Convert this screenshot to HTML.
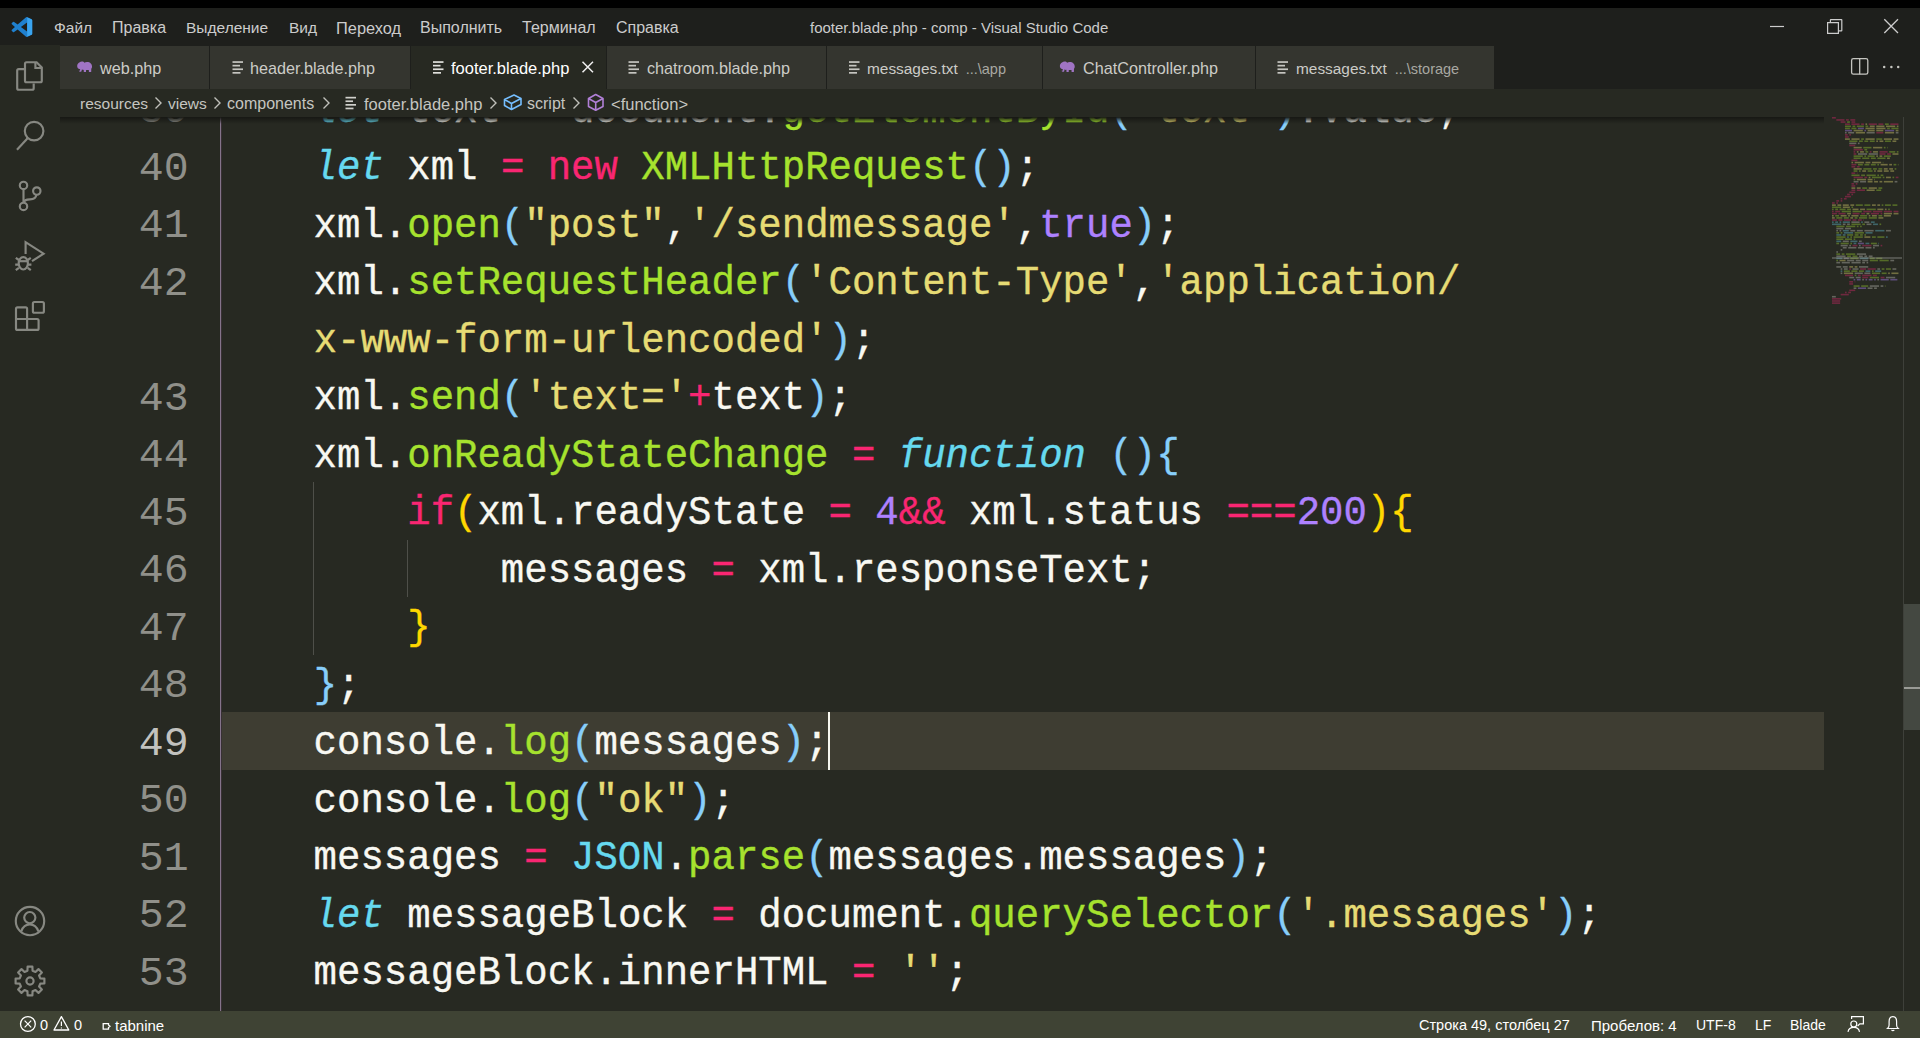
<!DOCTYPE html>
<html><head><meta charset="utf-8">
<style>
*{margin:0;padding:0;box-sizing:border-box}
html,body{width:1920px;height:1038px;overflow:hidden;background:#000;font-family:"Liberation Sans",sans-serif}
.abs{position:absolute}
#title{position:absolute;left:0;top:8px;width:1920px;height:37px;background:#1e1f1c;color:#cccccc;font-size:16px}
#title .m{position:absolute;top:11px;white-space:nowrap}
#act{position:absolute;left:0;top:45px;width:60px;height:966px;background:#272922}
#tabs{position:absolute;left:60px;top:45px;width:1860px;height:44px;background:#1e1f1c}
.tab{position:absolute;top:1px;height:43px;background:#34352f;color:#ccccc7;font-size:16.2px;white-space:nowrap}
.tab.active{background:#272922;color:#ffffff;font-size:16.5px}
.tab .lbl{position:absolute;top:13px}
.tab .desc{font-size:14.5px;color:#a8a8a2;margin-left:8px}
#crumbs{position:absolute;left:60px;top:89px;width:1860px;height:28px;background:#272922;color:#c5c5c0;font-size:15.5px;white-space:nowrap}
#crumbs span{position:absolute;top:6px}
#editor{position:absolute;left:60px;top:117px;width:1860px;height:894px;background:#272922;overflow:hidden}
#code{position:absolute;left:-60px;top:-117px;width:1920px;height:1011px}
.row{position:absolute;left:220px;height:57.5px;line-height:57.5px;font-family:"Liberation Mono",monospace;font-size:39px;color:#f8f8f2;white-space:pre;transform:scaleY(1.04);transform-origin:0 37px;-webkit-text-stroke:0.35px currentColor}
.row i{font-style:italic}
.ln{position:absolute;left:80px;width:108.6px;text-align:right;height:57.5px;line-height:57.5px;font-family:"Liberation Mono",monospace;font-size:41.5px;color:#90908a}
.ln.act{color:#c2c2bf}
#shadow{position:absolute;left:60px;top:117px;width:1764px;height:7px;background:linear-gradient(#171814,rgba(39,40,34,0))}
#status{position:absolute;left:0;top:1011px;width:1920px;height:27px;background:#3f4334;color:#ffffff;font-size:14.5px;white-space:nowrap}
#status .s{position:absolute;top:6px}
#icons{position:absolute;left:0;top:0}
</style></head><body>
<div id="title">
  <span class="m" style="left:54px;font-size:15.5px">Файл</span>
  <span class="m" style="left:112px">Правка</span>
  <span class="m" style="left:186px;font-size:15.5px">Выделение</span>
  <span class="m" style="left:289px;font-size:15.5px">Вид</span>
  <span class="m" style="left:336px;font-size:16.4px">Переход</span>
  <span class="m" style="left:420px">Выполнить</span>
  <span class="m" style="left:522px">Терминал</span>
  <span class="m" style="left:616px">Справка</span>
  <span class="m" style="left:810px;font-size:15px">footer.blade.php - comp - Visual Studio Code</span>
</div>
<div id="act"></div>
<div id="tabs">
<div class="tab" style="left:0px;width:149px"><span class="lbl" style="left:40px"><span style="font-size:16.2px">web.php</span></span></div>
<div class="tab" style="left:150px;width:200px"><span class="lbl" style="left:40px"><span style="font-size:16.2px">header.blade.php</span></span></div>
<div class="tab active" style="left:351px;width:195px"><span class="lbl" style="left:40px"><span style="font-size:16.5px">footer.blade.php</span></span></div>
<div class="tab" style="left:547px;width:219px"><span class="lbl" style="left:40px"><span style="font-size:16.2px">chatroom.blade.php</span></span></div>
<div class="tab" style="left:767px;width:215px"><span class="lbl" style="left:40px"><span style="font-size:15.4px">messages.txt</span><span class="desc">...\app</span></span></div>
<div class="tab" style="left:983px;width:212px"><span class="lbl" style="left:40px"><span style="font-size:16.2px">ChatController.php</span></span></div>
<div class="tab" style="left:1196px;width:238px"><span class="lbl" style="left:40px"><span style="font-size:15.4px">messages.txt</span><span class="desc">...\storage</span></span></div>
</div>
<div id="crumbs">
  <span style="left:20px">resources</span>
  <span style="left:108px">views</span>
  <span style="left:167px;font-size:16px">components</span>
  <span style="left:304px;font-size:16.5px">footer.blade.php</span>
  <span style="left:467px;font-size:16px">script</span>
  <span style="left:551px;font-size:16.5px">&lt;function&gt;</span>
</div>
<div id="editor"><div id="code">
<div class="abs" style="left:222px;top:712.0px;width:1602px;height:57.5px;background:#3e3d32"></div>
<div class="abs" style="left:220px;top:117px;width:1px;height:894px;background:#84738a"></div>
<div class="abs" style="left:221px;top:117px;width:1px;height:894px;background:rgba(160,90,160,0.14)"></div>
<div class="abs" style="left:313px;top:482.0px;width:1px;height:172.5px;background:#4e4f49"></div>
<div class="abs" style="left:407px;top:539.5px;width:1px;height:57.5px;background:#4e4f49"></div>
<div class="ln" style="top:82.30px">39</div>
<div class="row" style="top:83.50px">    <i style="color:#66d9ef">let</i> text <span style="color:#f92672">=</span> document.<span style="color:#a6e22e">getElementById</span><span style="color:#87cefa">(</span><span style="color:#e6db74">&#x27;text&#x27;</span><span style="color:#87cefa">)</span>.value;</div>
<div class="ln" style="top:139.80px">40</div>
<div class="row" style="top:141.00px">    <i style="color:#66d9ef">let</i> xml <span style="color:#f92672">=</span> <span style="color:#f92672">new</span> <span style="color:#a6e22e">XMLHttpRequest</span><span style="color:#87cefa">()</span>;</div>
<div class="ln" style="top:197.30px">41</div>
<div class="row" style="top:198.50px">    xml.<span style="color:#a6e22e">open</span><span style="color:#87cefa">(</span><span style="color:#e6db74">&quot;post&quot;</span>,<span style="color:#e6db74">&#x27;/sendmessage&#x27;</span>,<span style="color:#ae81ff">true</span><span style="color:#87cefa">)</span>;</div>
<div class="ln" style="top:254.80px">42</div>
<div class="row" style="top:256.00px">    xml.<span style="color:#a6e22e">setRequestHeader</span><span style="color:#87cefa">(</span><span style="color:#e6db74">&#x27;Content-Type&#x27;</span>,<span style="color:#e6db74">&#x27;application/</span></div>
<div class="row" style="top:313.50px">    <span style="color:#e6db74">x-www-form-urlencoded&#x27;</span><span style="color:#87cefa">)</span>;</div>
<div class="ln" style="top:369.80px">43</div>
<div class="row" style="top:371.00px">    xml.<span style="color:#a6e22e">send</span><span style="color:#87cefa">(</span><span style="color:#e6db74">&#x27;text=&#x27;</span><span style="color:#f92672">+</span>text<span style="color:#87cefa">)</span>;</div>
<div class="ln" style="top:427.30px">44</div>
<div class="row" style="top:428.50px">    xml.<span style="color:#a6e22e">onReadyStateChange</span> <span style="color:#f92672">=</span> <i style="color:#66d9ef">function</i> <span style="color:#87cefa">(){</span></div>
<div class="ln" style="top:484.80px">45</div>
<div class="row" style="top:486.00px">        <span style="color:#f92672">if</span><span style="color:#ffd700">(</span>xml.readyState <span style="color:#f92672">=</span> <span style="color:#ae81ff">4</span><span style="color:#f92672">&amp;&amp;</span> xml.status <span style="color:#f92672">===</span><span style="color:#ae81ff">200</span><span style="color:#ffd700">){</span></div>
<div class="ln" style="top:542.30px">46</div>
<div class="row" style="top:543.50px">            messages <span style="color:#f92672">=</span> xml.responseText;</div>
<div class="ln" style="top:599.80px">47</div>
<div class="row" style="top:601.00px">        <span style="color:#ffd700">}</span></div>
<div class="ln" style="top:657.30px">48</div>
<div class="row" style="top:658.50px">    <span style="color:#87cefa">}</span>;</div>
<div class="ln act" style="top:714.80px">49</div>
<div class="row" style="top:716.00px">    console.<span style="color:#a6e22e">log</span><span style="color:#87cefa">(</span>messages<span style="color:#87cefa">)</span>;</div>
<div class="ln" style="top:772.30px">50</div>
<div class="row" style="top:773.50px">    console.<span style="color:#a6e22e">log</span><span style="color:#87cefa">(</span><span style="color:#e6db74">&quot;ok&quot;</span><span style="color:#87cefa">)</span>;</div>
<div class="ln" style="top:829.80px">51</div>
<div class="row" style="top:831.00px">    messages <span style="color:#f92672">=</span> <span style="color:#66d9ef">JSON</span>.<span style="color:#a6e22e">parse</span><span style="color:#87cefa">(</span>messages.messages<span style="color:#87cefa">)</span>;</div>
<div class="ln" style="top:887.30px">52</div>
<div class="row" style="top:888.50px">    <i style="color:#66d9ef">let</i> messageBlock <span style="color:#f92672">=</span> document.<span style="color:#a6e22e">querySelector</span><span style="color:#87cefa">(</span><span style="color:#e6db74">&#x27;.messages&#x27;</span><span style="color:#87cefa">)</span>;</div>
<div class="ln" style="top:944.80px">53</div>
<div class="row" style="top:946.00px">    messageBlock.innerHTML <span style="color:#f92672">=</span> <span style="color:#e6db74">&#x27;&#x27;</span>;</div>
<div class="abs" style="left:828px;top:712.0px;width:2px;height:57.5px;background:#f8f8f0"></div>
</div></div>
<div id="shadow"></div>
<div class="abs" style="left:1903px;top:604px;width:17px;height:126px;background:#444841"></div>
<div class="abs" style="left:1903px;top:117px;width:1px;height:894px;background:#3e403a"></div>
<div class="abs" style="left:1904px;top:687px;width:16px;height:2px;background:#9a9b96"></div>
<div id="status">
  <span class="s" style="left:40px">0</span>
  <span class="s" style="left:74px">0</span>
  <span class="s" style="left:115px;font-size:15px">tabnine</span>
  <span class="s" style="left:1419px">Строка 49, столбец 27</span>
  <span class="s" style="left:1591px;font-size:15px">Пробелов: 4</span>
  <span class="s" style="left:1696px;font-size:14px">UTF-8</span>
  <span class="s" style="left:1755px;font-size:14px">LF</span>
  <span class="s" style="left:1790px;font-size:14px">Blade</span>
</div>
<svg id="icons" width="1920" height="1038" viewBox="0 0 1920 1038">
<rect x="1832.00" y="117.00" width="3.82" height="1.6" fill="rgba(200,40,100,0.45)"/>
<rect x="1836.32" y="119.13" width="8.14" height="1.6" fill="rgba(200,40,100,0.45)"/>
<rect x="1846.04" y="119.13" width="2.74" height="1.6" fill="rgba(200,40,100,0.45)"/>
<rect x="1850.36" y="119.13" width="4.90" height="1.6" fill="rgba(200,40,100,0.45)"/>
<rect x="1840.64" y="121.26" width="4.90" height="1.6" fill="rgba(200,40,100,0.45)"/>
<rect x="1847.12" y="121.26" width="2.74" height="1.6" fill="rgba(150,200,50,0.42)"/>
<rect x="1851.44" y="121.26" width="3.82" height="1.6" fill="rgba(200,40,100,0.45)"/>
<rect x="1844.96" y="123.39" width="4.90" height="1.6" fill="rgba(200,40,100,0.45)"/>
<rect x="1851.44" y="123.39" width="8.14" height="1.6" fill="rgba(200,40,100,0.45)"/>
<rect x="1861.16" y="123.39" width="2.74" height="1.6" fill="rgba(200,40,100,0.45)"/>
<rect x="1865.48" y="123.39" width="1.66" height="1.6" fill="rgba(220,210,110,0.42)"/>
<rect x="1868.72" y="123.39" width="8.14" height="1.6" fill="rgba(200,40,100,0.45)"/>
<rect x="1878.44" y="123.39" width="4.90" height="1.6" fill="rgba(200,40,100,0.45)"/>
<rect x="1884.92" y="123.39" width="3.82" height="1.6" fill="rgba(150,200,50,0.42)"/>
<rect x="1890.32" y="123.39" width="8.14" height="1.6" fill="rgba(200,40,100,0.45)"/>
<rect x="1844.96" y="125.52" width="5.98" height="1.6" fill="rgba(150,200,50,0.42)"/>
<rect x="1852.52" y="125.52" width="2.74" height="1.6" fill="rgba(150,200,50,0.42)"/>
<rect x="1856.84" y="125.52" width="7.06" height="1.6" fill="rgba(150,200,50,0.42)"/>
<rect x="1865.48" y="125.52" width="2.74" height="1.6" fill="rgba(150,200,50,0.42)"/>
<rect x="1869.80" y="125.52" width="4.90" height="1.6" fill="rgba(220,210,110,0.42)"/>
<rect x="1876.28" y="125.52" width="8.14" height="1.6" fill="rgba(220,210,110,0.42)"/>
<rect x="1886.00" y="125.52" width="9.22" height="1.6" fill="rgba(220,210,110,0.42)"/>
<rect x="1896.80" y="125.52" width="1.66" height="1.6" fill="rgba(220,210,110,0.42)"/>
<rect x="1844.96" y="127.65" width="4.90" height="1.6" fill="rgba(150,200,50,0.42)"/>
<rect x="1851.44" y="127.65" width="4.90" height="1.6" fill="rgba(150,200,50,0.42)"/>
<rect x="1857.92" y="127.65" width="5.98" height="1.6" fill="rgba(160,120,230,0.45)"/>
<rect x="1865.48" y="127.65" width="9.22" height="1.6" fill="rgba(220,210,110,0.42)"/>
<rect x="1876.28" y="127.65" width="9.22" height="1.6" fill="rgba(220,210,110,0.42)"/>
<rect x="1887.08" y="127.65" width="2.74" height="1.6" fill="rgba(150,200,50,0.42)"/>
<rect x="1891.40" y="127.65" width="7.06" height="1.6" fill="rgba(150,200,50,0.42)"/>
<rect x="1844.96" y="129.78" width="7.06" height="1.6" fill="rgba(160,120,230,0.45)"/>
<rect x="1853.60" y="129.78" width="9.22" height="1.6" fill="rgba(220,210,110,0.42)"/>
<rect x="1864.40" y="129.78" width="1.66" height="1.6" fill="rgba(160,120,230,0.45)"/>
<rect x="1867.64" y="129.78" width="7.06" height="1.6" fill="rgba(220,210,110,0.42)"/>
<rect x="1876.28" y="129.78" width="7.06" height="1.6" fill="rgba(220,210,110,0.42)"/>
<rect x="1884.92" y="129.78" width="9.22" height="1.6" fill="rgba(160,120,230,0.45)"/>
<rect x="1895.72" y="129.78" width="2.74" height="1.6" fill="rgba(220,210,110,0.42)"/>
<rect x="1844.96" y="131.91" width="1.66" height="1.6" fill="rgba(230,230,220,0.32)"/>
<rect x="1848.20" y="131.91" width="5.98" height="1.6" fill="rgba(230,230,220,0.32)"/>
<rect x="1855.76" y="131.91" width="9.22" height="1.6" fill="rgba(220,210,110,0.42)"/>
<rect x="1866.56" y="131.91" width="8.14" height="1.6" fill="rgba(230,230,220,0.32)"/>
<rect x="1876.28" y="131.91" width="7.06" height="1.6" fill="rgba(200,40,100,0.45)"/>
<rect x="1884.92" y="131.91" width="9.22" height="1.6" fill="rgba(220,210,110,0.42)"/>
<rect x="1895.72" y="131.91" width="2.74" height="1.6" fill="rgba(230,230,220,0.32)"/>
<rect x="1844.96" y="134.04" width="2.74" height="1.6" fill="rgba(200,40,100,0.45)"/>
<rect x="1849.28" y="134.04" width="1.66" height="1.6" fill="rgba(200,40,100,0.45)"/>
<rect x="1844.96" y="136.17" width="3.82" height="1.6" fill="rgba(200,40,100,0.45)"/>
<rect x="1844.96" y="138.30" width="4.90" height="1.6" fill="rgba(220,210,110,0.42)"/>
<rect x="1851.44" y="138.30" width="8.14" height="1.6" fill="rgba(220,210,110,0.42)"/>
<rect x="1861.16" y="138.30" width="2.74" height="1.6" fill="rgba(150,200,50,0.42)"/>
<rect x="1865.48" y="138.30" width="9.22" height="1.6" fill="rgba(220,210,110,0.42)"/>
<rect x="1876.28" y="138.30" width="5.98" height="1.6" fill="rgba(150,200,50,0.42)"/>
<rect x="1883.84" y="138.30" width="8.14" height="1.6" fill="rgba(220,210,110,0.42)"/>
<rect x="1893.56" y="138.30" width="4.90" height="1.6" fill="rgba(220,210,110,0.42)"/>
<rect x="1849.28" y="140.43" width="8.14" height="1.6" fill="rgba(150,200,50,0.42)"/>
<rect x="1859.00" y="140.43" width="3.82" height="1.6" fill="rgba(150,200,50,0.42)"/>
<rect x="1864.40" y="140.43" width="3.82" height="1.6" fill="rgba(150,200,50,0.42)"/>
<rect x="1869.80" y="140.43" width="4.90" height="1.6" fill="rgba(150,200,50,0.42)"/>
<rect x="1876.28" y="140.43" width="1.66" height="1.6" fill="rgba(220,210,110,0.42)"/>
<rect x="1879.52" y="140.43" width="3.82" height="1.6" fill="rgba(220,210,110,0.42)"/>
<rect x="1884.92" y="140.43" width="5.98" height="1.6" fill="rgba(150,200,50,0.42)"/>
<rect x="1892.48" y="140.43" width="3.82" height="1.6" fill="rgba(220,210,110,0.42)"/>
<rect x="1849.28" y="142.56" width="7.06" height="1.6" fill="rgba(230,230,220,0.32)"/>
<rect x="1857.92" y="142.56" width="1.66" height="1.6" fill="rgba(230,230,220,0.32)"/>
<rect x="1849.28" y="144.69" width="5.98" height="1.6" fill="rgba(200,40,100,0.45)"/>
<rect x="1853.60" y="146.82" width="8.14" height="1.6" fill="rgba(220,210,110,0.42)"/>
<rect x="1863.32" y="146.82" width="8.14" height="1.6" fill="rgba(150,200,50,0.42)"/>
<rect x="1873.04" y="146.82" width="9.22" height="1.6" fill="rgba(220,210,110,0.42)"/>
<rect x="1883.84" y="146.82" width="1.66" height="1.6" fill="rgba(150,200,50,0.42)"/>
<rect x="1887.08" y="146.82" width="0.58" height="1.6" fill="rgba(150,200,50,0.42)"/>
<rect x="1853.60" y="148.95" width="9.22" height="1.6" fill="rgba(200,40,100,0.45)"/>
<rect x="1864.40" y="148.95" width="2.74" height="1.6" fill="rgba(150,200,50,0.42)"/>
<rect x="1853.60" y="151.08" width="1.66" height="1.6" fill="rgba(200,40,100,0.45)"/>
<rect x="1856.84" y="151.08" width="1.66" height="1.6" fill="rgba(220,210,110,0.42)"/>
<rect x="1860.08" y="151.08" width="3.82" height="1.6" fill="rgba(220,210,110,0.42)"/>
<rect x="1865.48" y="151.08" width="2.74" height="1.6" fill="rgba(150,200,50,0.42)"/>
<rect x="1869.80" y="151.08" width="1.66" height="1.6" fill="rgba(200,40,100,0.45)"/>
<rect x="1873.04" y="151.08" width="4.90" height="1.6" fill="rgba(220,210,110,0.42)"/>
<rect x="1879.52" y="151.08" width="8.14" height="1.6" fill="rgba(200,40,100,0.45)"/>
<rect x="1889.24" y="151.08" width="5.98" height="1.6" fill="rgba(150,200,50,0.42)"/>
<rect x="1896.80" y="151.08" width="1.66" height="1.6" fill="rgba(150,200,50,0.42)"/>
<rect x="1853.60" y="153.21" width="2.74" height="1.6" fill="rgba(200,40,100,0.45)"/>
<rect x="1857.92" y="153.21" width="9.22" height="1.6" fill="rgba(230,230,220,0.32)"/>
<rect x="1868.72" y="153.21" width="9.22" height="1.6" fill="rgba(230,230,220,0.32)"/>
<rect x="1879.52" y="153.21" width="5.98" height="1.6" fill="rgba(200,40,100,0.45)"/>
<rect x="1887.08" y="153.21" width="3.82" height="1.6" fill="rgba(200,40,100,0.45)"/>
<rect x="1892.48" y="153.21" width="5.98" height="1.6" fill="rgba(220,210,110,0.42)"/>
<rect x="1853.60" y="155.34" width="9.22" height="1.6" fill="rgba(150,200,50,0.42)"/>
<rect x="1864.40" y="155.34" width="1.66" height="1.6" fill="rgba(150,200,50,0.42)"/>
<rect x="1867.64" y="155.34" width="7.06" height="1.6" fill="rgba(150,200,50,0.42)"/>
<rect x="1876.28" y="155.34" width="1.66" height="1.6" fill="rgba(220,210,110,0.42)"/>
<rect x="1879.52" y="155.34" width="2.74" height="1.6" fill="rgba(220,210,110,0.42)"/>
<rect x="1883.84" y="155.34" width="7.06" height="1.6" fill="rgba(150,200,50,0.42)"/>
<rect x="1853.60" y="157.47" width="7.06" height="1.6" fill="rgba(150,200,50,0.42)"/>
<rect x="1862.24" y="157.47" width="7.06" height="1.6" fill="rgba(150,200,50,0.42)"/>
<rect x="1870.88" y="157.47" width="4.90" height="1.6" fill="rgba(150,200,50,0.42)"/>
<rect x="1877.36" y="157.47" width="8.14" height="1.6" fill="rgba(150,200,50,0.42)"/>
<rect x="1887.08" y="157.47" width="2.74" height="1.6" fill="rgba(220,210,110,0.42)"/>
<rect x="1851.44" y="159.60" width="5.98" height="1.6" fill="rgba(200,40,100,0.45)"/>
<rect x="1851.44" y="161.73" width="1.66" height="1.6" fill="rgba(220,210,110,0.42)"/>
<rect x="1854.68" y="161.73" width="9.22" height="1.6" fill="rgba(220,210,110,0.42)"/>
<rect x="1865.48" y="161.73" width="4.90" height="1.6" fill="rgba(220,210,110,0.42)"/>
<rect x="1871.96" y="161.73" width="9.22" height="1.6" fill="rgba(220,210,110,0.42)"/>
<rect x="1882.76" y="161.73" width="0.58" height="1.6" fill="rgba(150,200,50,0.42)"/>
<rect x="1851.44" y="163.86" width="4.90" height="1.6" fill="rgba(200,40,100,0.45)"/>
<rect x="1857.92" y="163.86" width="4.90" height="1.6" fill="rgba(150,200,50,0.42)"/>
<rect x="1864.40" y="163.86" width="4.90" height="1.6" fill="rgba(150,200,50,0.42)"/>
<rect x="1870.88" y="163.86" width="4.90" height="1.6" fill="rgba(150,200,50,0.42)"/>
<rect x="1877.36" y="163.86" width="1.66" height="1.6" fill="rgba(150,200,50,0.42)"/>
<rect x="1880.60" y="163.86" width="7.06" height="1.6" fill="rgba(220,210,110,0.42)"/>
<rect x="1889.24" y="163.86" width="2.74" height="1.6" fill="rgba(220,210,110,0.42)"/>
<rect x="1893.56" y="163.86" width="2.74" height="1.6" fill="rgba(150,200,50,0.42)"/>
<rect x="1897.88" y="163.86" width="0.58" height="1.6" fill="rgba(150,200,50,0.42)"/>
<rect x="1851.44" y="165.99" width="3.82" height="1.6" fill="rgba(200,40,100,0.45)"/>
<rect x="1856.84" y="165.99" width="2.74" height="1.6" fill="rgba(200,40,100,0.45)"/>
<rect x="1853.60" y="168.12" width="8.14" height="1.6" fill="rgba(220,210,110,0.42)"/>
<rect x="1863.32" y="168.12" width="8.14" height="1.6" fill="rgba(150,200,50,0.42)"/>
<rect x="1873.04" y="168.12" width="3.82" height="1.6" fill="rgba(150,200,50,0.42)"/>
<rect x="1878.44" y="168.12" width="3.82" height="1.6" fill="rgba(150,200,50,0.42)"/>
<rect x="1883.84" y="168.12" width="3.82" height="1.6" fill="rgba(220,210,110,0.42)"/>
<rect x="1889.24" y="168.12" width="3.82" height="1.6" fill="rgba(220,210,110,0.42)"/>
<rect x="1894.64" y="168.12" width="1.66" height="1.6" fill="rgba(150,200,50,0.42)"/>
<rect x="1853.60" y="170.25" width="3.82" height="1.6" fill="rgba(150,200,50,0.42)"/>
<rect x="1859.00" y="170.25" width="1.66" height="1.6" fill="rgba(150,200,50,0.42)"/>
<rect x="1862.24" y="170.25" width="3.82" height="1.6" fill="rgba(220,210,110,0.42)"/>
<rect x="1867.64" y="170.25" width="4.90" height="1.6" fill="rgba(150,200,50,0.42)"/>
<rect x="1874.12" y="170.25" width="1.66" height="1.6" fill="rgba(220,210,110,0.42)"/>
<rect x="1877.36" y="170.25" width="4.90" height="1.6" fill="rgba(220,210,110,0.42)"/>
<rect x="1883.84" y="170.25" width="4.90" height="1.6" fill="rgba(220,210,110,0.42)"/>
<rect x="1890.32" y="170.25" width="3.82" height="1.6" fill="rgba(220,210,110,0.42)"/>
<rect x="1851.44" y="172.38" width="3.82" height="1.6" fill="rgba(200,40,100,0.45)"/>
<rect x="1856.84" y="172.38" width="0.58" height="1.6" fill="rgba(200,40,100,0.45)"/>
<rect x="1851.44" y="174.51" width="8.14" height="1.6" fill="rgba(150,200,50,0.42)"/>
<rect x="1861.16" y="174.51" width="3.82" height="1.6" fill="rgba(150,200,50,0.42)"/>
<rect x="1866.56" y="174.51" width="9.22" height="1.6" fill="rgba(150,200,50,0.42)"/>
<rect x="1877.36" y="174.51" width="1.66" height="1.6" fill="rgba(150,200,50,0.42)"/>
<rect x="1880.60" y="174.51" width="2.74" height="1.6" fill="rgba(150,200,50,0.42)"/>
<rect x="1853.60" y="176.64" width="9.22" height="1.6" fill="rgba(200,40,100,0.45)"/>
<rect x="1864.40" y="176.64" width="2.74" height="1.6" fill="rgba(200,40,100,0.45)"/>
<rect x="1868.72" y="176.64" width="1.66" height="1.6" fill="rgba(220,210,110,0.42)"/>
<rect x="1871.96" y="176.64" width="9.22" height="1.6" fill="rgba(150,200,50,0.42)"/>
<rect x="1882.76" y="176.64" width="1.66" height="1.6" fill="rgba(150,200,50,0.42)"/>
<rect x="1886.00" y="176.64" width="4.90" height="1.6" fill="rgba(220,210,110,0.42)"/>
<rect x="1892.48" y="176.64" width="1.66" height="1.6" fill="rgba(150,200,50,0.42)"/>
<rect x="1895.72" y="176.64" width="2.74" height="1.6" fill="rgba(200,40,100,0.45)"/>
<rect x="1853.60" y="178.77" width="1.66" height="1.6" fill="rgba(150,200,50,0.42)"/>
<rect x="1856.84" y="178.77" width="9.22" height="1.6" fill="rgba(220,210,110,0.42)"/>
<rect x="1867.64" y="178.77" width="4.90" height="1.6" fill="rgba(220,210,110,0.42)"/>
<rect x="1874.12" y="178.77" width="0.58" height="1.6" fill="rgba(220,210,110,0.42)"/>
<rect x="1853.60" y="180.90" width="4.90" height="1.6" fill="rgba(230,230,220,0.32)"/>
<rect x="1860.08" y="180.90" width="5.98" height="1.6" fill="rgba(230,230,220,0.32)"/>
<rect x="1867.64" y="180.90" width="4.90" height="1.6" fill="rgba(220,210,110,0.42)"/>
<rect x="1874.12" y="180.90" width="3.82" height="1.6" fill="rgba(220,210,110,0.42)"/>
<rect x="1879.52" y="180.90" width="2.74" height="1.6" fill="rgba(220,210,110,0.42)"/>
<rect x="1883.84" y="180.90" width="9.22" height="1.6" fill="rgba(220,210,110,0.42)"/>
<rect x="1894.64" y="180.90" width="2.74" height="1.6" fill="rgba(230,230,220,0.32)"/>
<rect x="1851.44" y="183.03" width="2.74" height="1.6" fill="rgba(200,40,100,0.45)"/>
<rect x="1855.76" y="183.03" width="1.66" height="1.6" fill="rgba(200,40,100,0.45)"/>
<rect x="1851.44" y="185.16" width="3.82" height="1.6" fill="rgba(200,40,100,0.45)"/>
<rect x="1851.44" y="187.29" width="3.82" height="1.6" fill="rgba(220,210,110,0.42)"/>
<rect x="1856.84" y="187.29" width="3.82" height="1.6" fill="rgba(220,210,110,0.42)"/>
<rect x="1862.24" y="187.29" width="4.90" height="1.6" fill="rgba(150,200,50,0.42)"/>
<rect x="1868.72" y="187.29" width="8.14" height="1.6" fill="rgba(220,210,110,0.42)"/>
<rect x="1878.44" y="187.29" width="3.82" height="1.6" fill="rgba(150,200,50,0.42)"/>
<rect x="1851.44" y="189.42" width="3.82" height="1.6" fill="rgba(200,40,100,0.45)"/>
<rect x="1856.84" y="189.42" width="8.14" height="1.6" fill="rgba(200,40,100,0.45)"/>
<rect x="1866.56" y="189.42" width="8.14" height="1.6" fill="rgba(220,210,110,0.42)"/>
<rect x="1876.28" y="189.42" width="4.90" height="1.6" fill="rgba(150,200,50,0.42)"/>
<rect x="1849.28" y="191.55" width="5.98" height="1.6" fill="rgba(200,40,100,0.45)"/>
<rect x="1847.12" y="193.68" width="2.74" height="1.6" fill="rgba(200,40,100,0.45)"/>
<rect x="1851.44" y="193.68" width="1.66" height="1.6" fill="rgba(200,40,100,0.45)"/>
<rect x="1844.96" y="195.81" width="5.98" height="1.6" fill="rgba(200,40,100,0.45)"/>
<rect x="1840.64" y="197.94" width="1.66" height="1.6" fill="rgba(200,40,100,0.45)"/>
<rect x="1843.88" y="197.94" width="2.74" height="1.6" fill="rgba(200,40,100,0.45)"/>
<rect x="1836.32" y="200.07" width="2.74" height="1.6" fill="rgba(200,40,100,0.45)"/>
<rect x="1840.64" y="200.07" width="1.66" height="1.6" fill="rgba(200,40,100,0.45)"/>
<rect x="1832.00" y="202.20" width="2.74" height="1.6" fill="rgba(200,40,100,0.45)"/>
<rect x="1836.32" y="202.20" width="1.66" height="1.6" fill="rgba(200,40,100,0.45)"/>
<rect x="1832.00" y="204.33" width="3.82" height="1.6" fill="rgba(220,210,110,0.42)"/>
<rect x="1837.40" y="204.33" width="3.82" height="1.6" fill="rgba(220,210,110,0.42)"/>
<rect x="1842.80" y="204.33" width="5.98" height="1.6" fill="rgba(220,210,110,0.42)"/>
<rect x="1850.36" y="204.33" width="3.82" height="1.6" fill="rgba(220,210,110,0.42)"/>
<rect x="1855.76" y="204.33" width="7.06" height="1.6" fill="rgba(150,200,50,0.42)"/>
<rect x="1864.40" y="204.33" width="5.98" height="1.6" fill="rgba(150,200,50,0.42)"/>
<rect x="1871.96" y="204.33" width="3.82" height="1.6" fill="rgba(220,210,110,0.42)"/>
<rect x="1877.36" y="204.33" width="2.74" height="1.6" fill="rgba(220,210,110,0.42)"/>
<rect x="1881.68" y="204.33" width="1.66" height="1.6" fill="rgba(150,200,50,0.42)"/>
<rect x="1884.92" y="204.33" width="5.98" height="1.6" fill="rgba(150,200,50,0.42)"/>
<rect x="1892.48" y="204.33" width="4.90" height="1.6" fill="rgba(150,200,50,0.42)"/>
<rect x="1832.00" y="206.46" width="9.22" height="1.6" fill="rgba(150,200,50,0.42)"/>
<rect x="1842.80" y="206.46" width="7.06" height="1.6" fill="rgba(220,210,110,0.42)"/>
<rect x="1851.44" y="206.46" width="1.66" height="1.6" fill="rgba(150,200,50,0.42)"/>
<rect x="1832.00" y="208.59" width="1.66" height="1.6" fill="rgba(150,200,50,0.42)"/>
<rect x="1835.24" y="208.59" width="2.74" height="1.6" fill="rgba(150,200,50,0.42)"/>
<rect x="1839.56" y="208.59" width="5.98" height="1.6" fill="rgba(150,200,50,0.42)"/>
<rect x="1847.12" y="208.59" width="3.82" height="1.6" fill="rgba(150,200,50,0.42)"/>
<rect x="1852.52" y="208.59" width="5.98" height="1.6" fill="rgba(220,210,110,0.42)"/>
<rect x="1860.08" y="208.59" width="4.90" height="1.6" fill="rgba(220,210,110,0.42)"/>
<rect x="1866.56" y="208.59" width="9.22" height="1.6" fill="rgba(150,200,50,0.42)"/>
<rect x="1877.36" y="208.59" width="5.98" height="1.6" fill="rgba(220,210,110,0.42)"/>
<rect x="1884.92" y="208.59" width="1.66" height="1.6" fill="rgba(220,210,110,0.42)"/>
<rect x="1888.16" y="208.59" width="1.66" height="1.6" fill="rgba(150,200,50,0.42)"/>
<rect x="1832.00" y="210.72" width="1.66" height="1.6" fill="rgba(200,40,100,0.45)"/>
<rect x="1835.24" y="210.72" width="4.90" height="1.6" fill="rgba(200,40,100,0.45)"/>
<rect x="1841.72" y="210.72" width="9.22" height="1.6" fill="rgba(150,200,50,0.42)"/>
<rect x="1852.52" y="210.72" width="9.22" height="1.6" fill="rgba(150,200,50,0.42)"/>
<rect x="1863.32" y="210.72" width="8.14" height="1.6" fill="rgba(200,40,100,0.45)"/>
<rect x="1873.04" y="210.72" width="9.22" height="1.6" fill="rgba(200,40,100,0.45)"/>
<rect x="1883.84" y="210.72" width="8.14" height="1.6" fill="rgba(200,40,100,0.45)"/>
<rect x="1893.56" y="210.72" width="4.90" height="1.6" fill="rgba(200,40,100,0.45)"/>
<rect x="1832.00" y="212.85" width="4.90" height="1.6" fill="rgba(200,40,100,0.45)"/>
<rect x="1838.48" y="212.85" width="7.06" height="1.6" fill="rgba(200,40,100,0.45)"/>
<rect x="1847.12" y="212.85" width="3.82" height="1.6" fill="rgba(220,210,110,0.42)"/>
<rect x="1852.52" y="212.85" width="7.06" height="1.6" fill="rgba(200,40,100,0.45)"/>
<rect x="1861.16" y="212.85" width="3.82" height="1.6" fill="rgba(200,40,100,0.45)"/>
<rect x="1866.56" y="212.85" width="2.74" height="1.6" fill="rgba(220,210,110,0.42)"/>
<rect x="1870.88" y="212.85" width="8.14" height="1.6" fill="rgba(200,40,100,0.45)"/>
<rect x="1880.60" y="212.85" width="1.66" height="1.6" fill="rgba(200,40,100,0.45)"/>
<rect x="1883.84" y="212.85" width="8.14" height="1.6" fill="rgba(220,210,110,0.42)"/>
<rect x="1893.56" y="212.85" width="4.90" height="1.6" fill="rgba(220,210,110,0.42)"/>
<rect x="1832.00" y="214.98" width="1.66" height="1.6" fill="rgba(220,210,110,0.42)"/>
<rect x="1835.24" y="214.98" width="3.82" height="1.6" fill="rgba(150,200,50,0.42)"/>
<rect x="1840.64" y="214.98" width="5.98" height="1.6" fill="rgba(220,210,110,0.42)"/>
<rect x="1848.20" y="214.98" width="1.66" height="1.6" fill="rgba(220,210,110,0.42)"/>
<rect x="1851.44" y="214.98" width="7.06" height="1.6" fill="rgba(220,210,110,0.42)"/>
<rect x="1860.08" y="214.98" width="7.06" height="1.6" fill="rgba(150,200,50,0.42)"/>
<rect x="1868.72" y="214.98" width="1.66" height="1.6" fill="rgba(220,210,110,0.42)"/>
<rect x="1871.96" y="214.98" width="4.90" height="1.6" fill="rgba(220,210,110,0.42)"/>
<rect x="1878.44" y="214.98" width="3.82" height="1.6" fill="rgba(150,200,50,0.42)"/>
<rect x="1883.84" y="214.98" width="7.06" height="1.6" fill="rgba(220,210,110,0.42)"/>
<rect x="1832.00" y="217.11" width="2.74" height="1.6" fill="rgba(220,210,110,0.42)"/>
<rect x="1836.32" y="217.11" width="5.98" height="1.6" fill="rgba(150,200,50,0.42)"/>
<rect x="1843.88" y="217.11" width="4.90" height="1.6" fill="rgba(150,200,50,0.42)"/>
<rect x="1850.36" y="217.11" width="2.74" height="1.6" fill="rgba(220,210,110,0.42)"/>
<rect x="1854.68" y="217.11" width="2.74" height="1.6" fill="rgba(150,200,50,0.42)"/>
<rect x="1859.00" y="217.11" width="8.14" height="1.6" fill="rgba(150,200,50,0.42)"/>
<rect x="1868.72" y="217.11" width="8.14" height="1.6" fill="rgba(150,200,50,0.42)"/>
<rect x="1878.44" y="217.11" width="4.90" height="1.6" fill="rgba(220,210,110,0.42)"/>
<rect x="1832.00" y="219.24" width="4.90" height="1.6" fill="rgba(200,40,100,0.45)"/>
<rect x="1838.48" y="219.24" width="3.82" height="1.6" fill="rgba(200,40,100,0.45)"/>
<rect x="1843.88" y="219.24" width="7.06" height="1.6" fill="rgba(200,40,100,0.45)"/>
<rect x="1852.52" y="219.24" width="3.82" height="1.6" fill="rgba(200,40,100,0.45)"/>
<rect x="1857.92" y="219.24" width="3.82" height="1.6" fill="rgba(200,40,100,0.45)"/>
<rect x="1863.32" y="219.24" width="0.58" height="1.6" fill="rgba(200,40,100,0.45)"/>
<rect x="1832.00" y="221.37" width="1.66" height="1.6" fill="rgba(102,200,220,0.38)"/>
<rect x="1835.24" y="221.37" width="2.74" height="1.6" fill="rgba(102,200,220,0.38)"/>
<rect x="1839.56" y="221.37" width="1.66" height="1.6" fill="rgba(102,200,220,0.38)"/>
<rect x="1842.80" y="221.37" width="7.06" height="1.6" fill="rgba(102,200,220,0.38)"/>
<rect x="1851.44" y="221.37" width="8.14" height="1.6" fill="rgba(230,230,220,0.32)"/>
<rect x="1861.16" y="221.37" width="1.66" height="1.6" fill="rgba(102,200,220,0.38)"/>
<rect x="1864.40" y="221.37" width="4.90" height="1.6" fill="rgba(230,230,220,0.32)"/>
<rect x="1870.88" y="221.37" width="3.82" height="1.6" fill="rgba(102,200,220,0.38)"/>
<rect x="1832.00" y="223.50" width="9.22" height="1.6" fill="rgba(102,200,220,0.38)"/>
<rect x="1842.80" y="223.50" width="2.74" height="1.6" fill="rgba(230,230,220,0.32)"/>
<rect x="1847.12" y="223.50" width="2.74" height="1.6" fill="rgba(230,230,220,0.32)"/>
<rect x="1851.44" y="223.50" width="9.22" height="1.6" fill="rgba(150,200,50,0.42)"/>
<rect x="1862.24" y="223.50" width="2.74" height="1.6" fill="rgba(150,200,50,0.42)"/>
<rect x="1866.56" y="223.50" width="4.90" height="1.6" fill="rgba(230,230,220,0.32)"/>
<rect x="1873.04" y="223.50" width="4.90" height="1.6" fill="rgba(102,200,220,0.38)"/>
<rect x="1879.52" y="223.50" width="1.66" height="1.6" fill="rgba(150,200,50,0.42)"/>
<rect x="1836.32" y="225.63" width="8.14" height="1.6" fill="rgba(150,200,50,0.42)"/>
<rect x="1846.04" y="225.63" width="9.22" height="1.6" fill="rgba(150,200,50,0.42)"/>
<rect x="1856.84" y="225.63" width="1.66" height="1.6" fill="rgba(150,200,50,0.42)"/>
<rect x="1860.08" y="225.63" width="1.66" height="1.6" fill="rgba(150,200,50,0.42)"/>
<rect x="1836.32" y="227.76" width="7.06" height="1.6" fill="rgba(230,230,220,0.32)"/>
<rect x="1844.96" y="227.76" width="5.98" height="1.6" fill="rgba(230,230,220,0.32)"/>
<rect x="1836.32" y="229.89" width="1.66" height="1.6" fill="rgba(230,230,220,0.32)"/>
<rect x="1839.56" y="229.89" width="1.66" height="1.6" fill="rgba(230,230,220,0.32)"/>
<rect x="1842.80" y="229.89" width="5.98" height="1.6" fill="rgba(102,200,220,0.38)"/>
<rect x="1850.36" y="229.89" width="4.90" height="1.6" fill="rgba(230,230,220,0.32)"/>
<rect x="1856.84" y="229.89" width="5.98" height="1.6" fill="rgba(230,230,220,0.32)"/>
<rect x="1864.40" y="229.89" width="9.22" height="1.6" fill="rgba(230,230,220,0.32)"/>
<rect x="1875.20" y="229.89" width="9.22" height="1.6" fill="rgba(102,200,220,0.38)"/>
<rect x="1886.00" y="229.89" width="4.90" height="1.6" fill="rgba(230,230,220,0.32)"/>
<rect x="1836.32" y="232.02" width="2.74" height="1.6" fill="rgba(150,200,50,0.42)"/>
<rect x="1840.64" y="232.02" width="1.66" height="1.6" fill="rgba(150,200,50,0.42)"/>
<rect x="1843.88" y="232.02" width="9.22" height="1.6" fill="rgba(102,200,220,0.38)"/>
<rect x="1854.68" y="232.02" width="9.22" height="1.6" fill="rgba(150,200,50,0.42)"/>
<rect x="1865.48" y="232.02" width="7.06" height="1.6" fill="rgba(102,200,220,0.38)"/>
<rect x="1836.32" y="234.15" width="4.90" height="1.6" fill="rgba(102,200,220,0.38)"/>
<rect x="1842.80" y="234.15" width="2.74" height="1.6" fill="rgba(102,200,220,0.38)"/>
<rect x="1847.12" y="234.15" width="5.98" height="1.6" fill="rgba(150,200,50,0.42)"/>
<rect x="1854.68" y="234.15" width="3.82" height="1.6" fill="rgba(150,200,50,0.42)"/>
<rect x="1860.08" y="234.15" width="2.74" height="1.6" fill="rgba(150,200,50,0.42)"/>
<rect x="1864.40" y="234.15" width="1.66" height="1.6" fill="rgba(150,200,50,0.42)"/>
<rect x="1836.32" y="236.28" width="9.22" height="1.6" fill="rgba(150,200,50,0.42)"/>
<rect x="1847.12" y="236.28" width="1.66" height="1.6" fill="rgba(102,200,220,0.38)"/>
<rect x="1850.36" y="236.28" width="1.66" height="1.6" fill="rgba(150,200,50,0.42)"/>
<rect x="1853.60" y="236.28" width="9.22" height="1.6" fill="rgba(150,200,50,0.42)"/>
<rect x="1864.40" y="236.28" width="5.98" height="1.6" fill="rgba(220,210,110,0.42)"/>
<rect x="1871.96" y="236.28" width="3.82" height="1.6" fill="rgba(150,200,50,0.42)"/>
<rect x="1877.36" y="236.28" width="7.06" height="1.6" fill="rgba(150,200,50,0.42)"/>
<rect x="1886.00" y="236.28" width="1.66" height="1.6" fill="rgba(102,200,220,0.38)"/>
<rect x="1836.32" y="238.41" width="7.06" height="1.6" fill="rgba(150,200,50,0.42)"/>
<rect x="1844.96" y="238.41" width="7.06" height="1.6" fill="rgba(150,200,50,0.42)"/>
<rect x="1853.60" y="238.41" width="1.66" height="1.6" fill="rgba(150,200,50,0.42)"/>
<rect x="1836.32" y="240.54" width="4.90" height="1.6" fill="rgba(102,200,220,0.38)"/>
<rect x="1842.80" y="240.54" width="5.98" height="1.6" fill="rgba(230,230,220,0.32)"/>
<rect x="1850.36" y="240.54" width="7.06" height="1.6" fill="rgba(102,200,220,0.38)"/>
<rect x="1859.00" y="240.54" width="2.74" height="1.6" fill="rgba(230,230,220,0.32)"/>
<rect x="1836.32" y="242.67" width="2.74" height="1.6" fill="rgba(150,200,50,0.42)"/>
<rect x="1840.64" y="242.67" width="8.14" height="1.6" fill="rgba(150,200,50,0.42)"/>
<rect x="1850.36" y="242.67" width="1.66" height="1.6" fill="rgba(150,200,50,0.42)"/>
<rect x="1853.60" y="242.67" width="2.74" height="1.6" fill="rgba(102,200,220,0.38)"/>
<rect x="1857.92" y="242.67" width="5.98" height="1.6" fill="rgba(160,120,230,0.45)"/>
<rect x="1865.48" y="242.67" width="3.82" height="1.6" fill="rgba(102,200,220,0.38)"/>
<rect x="1870.88" y="242.67" width="5.98" height="1.6" fill="rgba(150,200,50,0.42)"/>
<rect x="1878.44" y="242.67" width="0.58" height="1.6" fill="rgba(102,200,220,0.38)"/>
<rect x="1840.64" y="244.80" width="7.06" height="1.6" fill="rgba(230,230,220,0.32)"/>
<rect x="1849.28" y="244.80" width="1.66" height="1.6" fill="rgba(230,230,220,0.32)"/>
<rect x="1852.52" y="244.80" width="4.90" height="1.6" fill="rgba(200,40,100,0.45)"/>
<rect x="1859.00" y="244.80" width="1.66" height="1.6" fill="rgba(230,230,220,0.32)"/>
<rect x="1862.24" y="244.80" width="9.22" height="1.6" fill="rgba(200,40,100,0.45)"/>
<rect x="1873.04" y="244.80" width="5.98" height="1.6" fill="rgba(230,230,220,0.32)"/>
<rect x="1880.60" y="244.80" width="1.66" height="1.6" fill="rgba(200,40,100,0.45)"/>
<rect x="1842.80" y="246.93" width="3.82" height="1.6" fill="rgba(230,230,220,0.32)"/>
<rect x="1848.20" y="246.93" width="8.14" height="1.6" fill="rgba(230,230,220,0.32)"/>
<rect x="1857.92" y="246.93" width="5.98" height="1.6" fill="rgba(230,230,220,0.32)"/>
<rect x="1865.48" y="246.93" width="5.98" height="1.6" fill="rgba(230,230,220,0.32)"/>
<rect x="1873.04" y="246.93" width="1.66" height="1.6" fill="rgba(230,230,220,0.32)"/>
<rect x="1840.64" y="249.06" width="1.66" height="1.6" fill="rgba(230,230,220,0.32)"/>
<rect x="1836.32" y="251.19" width="1.66" height="1.6" fill="rgba(230,230,220,0.32)"/>
<rect x="1836.32" y="253.32" width="3.82" height="1.6" fill="rgba(150,200,50,0.42)"/>
<rect x="1841.72" y="253.32" width="2.74" height="1.6" fill="rgba(150,200,50,0.42)"/>
<rect x="1846.04" y="253.32" width="9.22" height="1.6" fill="rgba(150,200,50,0.42)"/>
<rect x="1856.84" y="253.32" width="9.22" height="1.6" fill="rgba(230,230,220,0.32)"/>
<rect x="1836.32" y="255.45" width="9.22" height="1.6" fill="rgba(230,230,220,0.32)"/>
<rect x="1847.12" y="255.45" width="3.82" height="1.6" fill="rgba(150,200,50,0.42)"/>
<rect x="1852.52" y="255.45" width="4.90" height="1.6" fill="rgba(150,200,50,0.42)"/>
<rect x="1859.00" y="255.45" width="3.82" height="1.6" fill="rgba(230,230,220,0.32)"/>
<rect x="1864.40" y="255.45" width="2.74" height="1.6" fill="rgba(230,230,220,0.32)"/>
<rect x="1868.72" y="255.45" width="3.82" height="1.6" fill="rgba(230,230,220,0.32)"/>
<rect x="1836.32" y="257.58" width="5.98" height="1.6" fill="rgba(102,200,220,0.38)"/>
<rect x="1843.88" y="257.58" width="4.90" height="1.6" fill="rgba(230,230,220,0.32)"/>
<rect x="1850.36" y="257.58" width="8.14" height="1.6" fill="rgba(150,200,50,0.42)"/>
<rect x="1860.08" y="257.58" width="8.14" height="1.6" fill="rgba(102,200,220,0.38)"/>
<rect x="1869.80" y="257.58" width="4.90" height="1.6" fill="rgba(150,200,50,0.42)"/>
<rect x="1876.28" y="257.58" width="5.98" height="1.6" fill="rgba(150,200,50,0.42)"/>
<rect x="1836.32" y="259.71" width="1.66" height="1.6" fill="rgba(150,200,50,0.42)"/>
<rect x="1839.56" y="259.71" width="5.98" height="1.6" fill="rgba(220,210,110,0.42)"/>
<rect x="1847.12" y="259.71" width="7.06" height="1.6" fill="rgba(230,230,220,0.32)"/>
<rect x="1855.76" y="259.71" width="4.90" height="1.6" fill="rgba(230,230,220,0.32)"/>
<rect x="1862.24" y="259.71" width="5.98" height="1.6" fill="rgba(230,230,220,0.32)"/>
<rect x="1869.80" y="259.71" width="8.14" height="1.6" fill="rgba(150,200,50,0.42)"/>
<rect x="1879.52" y="259.71" width="9.22" height="1.6" fill="rgba(150,200,50,0.42)"/>
<rect x="1890.32" y="259.71" width="3.82" height="1.6" fill="rgba(230,230,220,0.32)"/>
<rect x="1836.32" y="261.84" width="3.82" height="1.6" fill="rgba(230,230,220,0.32)"/>
<rect x="1841.72" y="261.84" width="8.14" height="1.6" fill="rgba(230,230,220,0.32)"/>
<rect x="1851.44" y="261.84" width="9.22" height="1.6" fill="rgba(230,230,220,0.32)"/>
<rect x="1862.24" y="261.84" width="2.74" height="1.6" fill="rgba(230,230,220,0.32)"/>
<rect x="1866.56" y="261.84" width="1.66" height="1.6" fill="rgba(230,230,220,0.32)"/>
<rect x="1836.32" y="266.10" width="4.90" height="1.6" fill="rgba(230,230,220,0.32)"/>
<rect x="1842.80" y="266.10" width="4.90" height="1.6" fill="rgba(230,230,220,0.32)"/>
<rect x="1849.28" y="266.10" width="3.82" height="1.6" fill="rgba(220,210,110,0.42)"/>
<rect x="1854.68" y="266.10" width="2.74" height="1.6" fill="rgba(220,210,110,0.42)"/>
<rect x="1859.00" y="266.10" width="9.22" height="1.6" fill="rgba(230,230,220,0.32)"/>
<rect x="1840.64" y="268.23" width="1.66" height="1.6" fill="rgba(230,230,220,0.32)"/>
<rect x="1843.88" y="268.23" width="3.82" height="1.6" fill="rgba(230,230,220,0.32)"/>
<rect x="1849.28" y="268.23" width="1.66" height="1.6" fill="rgba(200,40,100,0.45)"/>
<rect x="1852.52" y="268.23" width="5.98" height="1.6" fill="rgba(230,230,220,0.32)"/>
<rect x="1860.08" y="268.23" width="5.98" height="1.6" fill="rgba(200,40,100,0.45)"/>
<rect x="1867.64" y="268.23" width="8.14" height="1.6" fill="rgba(200,40,100,0.45)"/>
<rect x="1877.36" y="268.23" width="2.74" height="1.6" fill="rgba(230,230,220,0.32)"/>
<rect x="1881.68" y="268.23" width="2.74" height="1.6" fill="rgba(150,200,50,0.42)"/>
<rect x="1886.00" y="268.23" width="4.90" height="1.6" fill="rgba(150,200,50,0.42)"/>
<rect x="1892.48" y="268.23" width="3.82" height="1.6" fill="rgba(230,230,220,0.32)"/>
<rect x="1840.64" y="270.36" width="1.66" height="1.6" fill="rgba(102,200,220,0.38)"/>
<rect x="1843.88" y="270.36" width="5.98" height="1.6" fill="rgba(150,200,50,0.42)"/>
<rect x="1851.44" y="270.36" width="5.98" height="1.6" fill="rgba(150,200,50,0.42)"/>
<rect x="1859.00" y="270.36" width="4.90" height="1.6" fill="rgba(150,200,50,0.42)"/>
<rect x="1865.48" y="270.36" width="4.90" height="1.6" fill="rgba(102,200,220,0.38)"/>
<rect x="1871.96" y="270.36" width="1.66" height="1.6" fill="rgba(150,200,50,0.42)"/>
<rect x="1875.20" y="270.36" width="5.98" height="1.6" fill="rgba(102,200,220,0.38)"/>
<rect x="1840.64" y="272.49" width="1.66" height="1.6" fill="rgba(230,230,220,0.32)"/>
<rect x="1843.88" y="272.49" width="9.22" height="1.6" fill="rgba(220,210,110,0.42)"/>
<rect x="1854.68" y="272.49" width="8.14" height="1.6" fill="rgba(230,230,220,0.32)"/>
<rect x="1864.40" y="272.49" width="5.98" height="1.6" fill="rgba(230,230,220,0.32)"/>
<rect x="1871.96" y="272.49" width="8.14" height="1.6" fill="rgba(150,200,50,0.42)"/>
<rect x="1881.68" y="272.49" width="4.90" height="1.6" fill="rgba(150,200,50,0.42)"/>
<rect x="1888.16" y="272.49" width="1.66" height="1.6" fill="rgba(220,210,110,0.42)"/>
<rect x="1891.40" y="272.49" width="7.06" height="1.6" fill="rgba(220,210,110,0.42)"/>
<rect x="1844.96" y="274.62" width="8.14" height="1.6" fill="rgba(200,40,100,0.45)"/>
<rect x="1854.68" y="274.62" width="1.66" height="1.6" fill="rgba(150,200,50,0.42)"/>
<rect x="1857.92" y="274.62" width="2.74" height="1.6" fill="rgba(200,40,100,0.45)"/>
<rect x="1862.24" y="274.62" width="9.22" height="1.6" fill="rgba(200,40,100,0.45)"/>
<rect x="1873.04" y="274.62" width="3.82" height="1.6" fill="rgba(200,40,100,0.45)"/>
<rect x="1849.28" y="276.75" width="4.90" height="1.6" fill="rgba(230,230,220,0.32)"/>
<rect x="1855.76" y="276.75" width="4.90" height="1.6" fill="rgba(230,230,220,0.32)"/>
<rect x="1862.24" y="276.75" width="5.98" height="1.6" fill="rgba(200,40,100,0.45)"/>
<rect x="1869.80" y="276.75" width="9.22" height="1.6" fill="rgba(150,200,50,0.42)"/>
<rect x="1880.60" y="276.75" width="3.82" height="1.6" fill="rgba(200,40,100,0.45)"/>
<rect x="1886.00" y="276.75" width="9.22" height="1.6" fill="rgba(230,230,220,0.32)"/>
<rect x="1853.60" y="278.88" width="1.66" height="1.6" fill="rgba(160,120,230,0.45)"/>
<rect x="1856.84" y="278.88" width="3.82" height="1.6" fill="rgba(160,120,230,0.45)"/>
<rect x="1862.24" y="278.88" width="1.66" height="1.6" fill="rgba(230,230,220,0.32)"/>
<rect x="1865.48" y="278.88" width="1.66" height="1.6" fill="rgba(160,120,230,0.45)"/>
<rect x="1868.72" y="278.88" width="3.82" height="1.6" fill="rgba(160,120,230,0.45)"/>
<rect x="1874.12" y="278.88" width="1.66" height="1.6" fill="rgba(160,120,230,0.45)"/>
<rect x="1877.36" y="278.88" width="1.66" height="1.6" fill="rgba(230,230,220,0.32)"/>
<rect x="1880.60" y="278.88" width="8.14" height="1.6" fill="rgba(160,120,230,0.45)"/>
<rect x="1890.32" y="278.88" width="7.06" height="1.6" fill="rgba(160,120,230,0.45)"/>
<rect x="1849.28" y="281.01" width="3.82" height="1.6" fill="rgba(200,40,100,0.45)"/>
<rect x="1854.68" y="281.01" width="0.58" height="1.6" fill="rgba(200,40,100,0.45)"/>
<rect x="1849.28" y="283.14" width="3.82" height="1.6" fill="rgba(200,40,100,0.45)"/>
<rect x="1853.60" y="285.27" width="5.98" height="1.6" fill="rgba(150,200,50,0.42)"/>
<rect x="1861.16" y="285.27" width="7.06" height="1.6" fill="rgba(150,200,50,0.42)"/>
<rect x="1869.80" y="285.27" width="9.22" height="1.6" fill="rgba(230,230,220,0.32)"/>
<rect x="1880.60" y="285.27" width="2.74" height="1.6" fill="rgba(230,230,220,0.32)"/>
<rect x="1884.92" y="285.27" width="0.58" height="1.6" fill="rgba(150,200,50,0.42)"/>
<rect x="1853.60" y="287.40" width="2.74" height="1.6" fill="rgba(230,230,220,0.32)"/>
<rect x="1857.92" y="287.40" width="8.14" height="1.6" fill="rgba(160,120,230,0.45)"/>
<rect x="1867.64" y="287.40" width="4.90" height="1.6" fill="rgba(230,230,220,0.32)"/>
<rect x="1874.12" y="287.40" width="2.74" height="1.6" fill="rgba(230,230,220,0.32)"/>
<rect x="1849.28" y="289.53" width="5.98" height="1.6" fill="rgba(200,40,100,0.45)"/>
<rect x="1844.96" y="291.66" width="1.66" height="1.6" fill="rgba(200,40,100,0.45)"/>
<rect x="1848.20" y="291.66" width="2.74" height="1.6" fill="rgba(200,40,100,0.45)"/>
<rect x="1840.64" y="293.79" width="8.14" height="1.6" fill="rgba(200,40,100,0.45)"/>
<rect x="1832.00" y="295.92" width="3.82" height="1.6" fill="rgba(230,230,220,0.32)"/>
<rect x="1832.00" y="298.05" width="9.22" height="1.6" fill="rgba(200,40,100,0.45)"/>
<rect x="1832.00" y="300.18" width="8.14" height="1.6" fill="rgba(200,40,100,0.45)"/>
<rect x="1832.00" y="302.31" width="8.14" height="1.6" fill="rgba(200,40,100,0.45)"/>
<rect x="1832" y="257.2" width="70" height="1.6" fill="rgba(160,160,155,0.45)"/>
<path d="M24.2 69.1 H18.7 Q17.2 69.1 17.2 70.6 V88.2 Q17.2 89.7 18.7 89.7 H32.2 Q33.7 89.7 33.7 88.2 V83.4" fill="none" stroke="#878882" stroke-width="2.15"/>
<path d="M26.5 62.2 H36.6 L41.8 67.4 V80.7 Q41.8 82.2 40.3 82.2 H26.5 Q25 82.2 25 80.7 V63.7 Q25 62.2 26.5 62.2 Z" fill="none" stroke="#878882" stroke-width="2.15"/>
<path d="M35.4 62.2 V68 H41.8" fill="none" stroke="#878882" stroke-width="2.15"/>
<circle cx="34.1" cy="131.1" r="9.3" fill="none" stroke="#878882" stroke-width="2.15"/>
<path d="M27.6 138.2 L17 149.8" fill="none" stroke="#878882" stroke-width="2.15" stroke-width="2.2"/>
<circle cx="23.5" cy="185.4" r="3.7" fill="none" stroke="#878882" stroke-width="2.15"/>
<circle cx="23.5" cy="206.4" r="3.7" fill="none" stroke="#878882" stroke-width="2.15"/>
<circle cx="36.8" cy="191" r="3.7" fill="none" stroke="#878882" stroke-width="2.15"/>
<path d="M23.5 189.1 V202.7" fill="none" stroke="#878882" stroke-width="2.15"/>
<path d="M36.4 194.7 C36 198.6 33.5 199.4 30 199.4 C26.2 199.4 24 200.2 23.5 203" fill="none" stroke="#878882" stroke-width="2.15"/>
<path d="M25.6 254 V242.2 L43.6 253.7 L32 261.2" fill="none" stroke="#878882" stroke-width="2.15" stroke-linejoin="miter"/>
<ellipse cx="23.3" cy="263.3" rx="4.6" ry="6.2" fill="none" stroke="#878882" stroke-width="2.15"/>
<path d="M18.9 261.2 H27.7" fill="none" stroke="#878882" stroke-width="2.15" stroke-width="1.8"/>
<path d="M15.8 257.8 L18.9 260 M30.8 257.8 L27.7 260 M15.2 264.6 H18.6 M28 264.6 H31.4 M15.8 270.2 L18.9 267.8 M30.8 270.2 L27.7 267.8" fill="none" stroke="#878882" stroke-width="2.15" stroke-width="1.8"/>
<path d="M17.5 307.3 H25.6 Q27.1 307.3 27.1 308.8 V319 H37.1 Q38.6 319 38.6 320.5 V328.4 Q38.6 329.9 37.1 329.9 H17.5 Q16 329.9 16 328.4 V308.8 Q16 307.3 17.5 307.3 Z M16 319 H27.1 V329.9" fill="none" stroke="#878882" stroke-width="2.15"/>
<rect x="32.9" y="302" width="11" height="10.7" rx="1.5" fill="none" stroke="#878882" stroke-width="2.15"/>
<circle cx="30" cy="921" r="14.2" fill="none" stroke="#878882" stroke-width="2.15"/>
<circle cx="29.8" cy="917.6" r="5.6" fill="none" stroke="#878882" stroke-width="2.15"/>
<path d="M21.2 931.4 C22.8 927 25.8 924.4 29.8 924.4 C33.8 924.4 36.8 927 38.4 931.4" fill="none" stroke="#878882" stroke-width="2.15"/>
<path d="M40.29 978.44 L44.40 978.60 L44.40 983.40 L40.29 983.56 L39.08 986.47 L41.88 989.49 L38.49 992.88 L35.47 990.08 L32.56 991.29 L32.40 995.40 L27.60 995.40 L27.44 991.29 L24.53 990.08 L21.51 992.88 L18.12 989.49 L20.92 986.47 L19.71 983.56 L15.60 983.40 L15.60 978.60 L19.71 978.44 L20.92 975.53 L18.12 972.51 L21.51 969.12 L24.53 971.92 L27.44 970.71 L27.60 966.60 L32.40 966.60 L32.56 970.71 L35.47 971.92 L38.49 969.12 L41.88 972.51 L39.08 975.53 Z" fill="none" stroke="#878882" stroke-width="2.15" stroke-linejoin="round"/>
<circle cx="30" cy="981" r="3.6" fill="none" stroke="#878882" stroke-width="2.15"/>
<g transform="translate(11.6,17) scale(0.206,0.2)"><path d="M96.46 10.8L75.86.87a6.23 6.23 0 0 0-7.1 1.2L29.33 38.04 12.15 25a4.16 4.16 0 0 0-5.320.24L1.33 30.25a4.16 4.16 0 0 0 0 6.16L16.23 50 1.33 63.59a4.16 4.16 0 0 0 0 6.16l5.5 5a4.16 4.16 0 0 0 5.32.24l17.180-13.04 39.43 35.97a6.23 6.23 0 0 0 7.1 1.2l20.6-9.92a6.25 6.25 0 0 0 3.540-5.63V16.43a6.25 6.25 0 0 0-3.540-5.63zM75.02 72.7L45.1 50l29.920-22.7z" fill="#1f80cf"/><path d="M75.86.87 L96.46 10.8 a6.25 6.25 0 0 1 3.54 5.63 V83.57 a6.25 6.25 0 0 1 -3.54 5.63 L75.86 99.13 Z" fill="#3aa4ef"/></g>
<path d="M1770 26.5 H1784" stroke="#cccccc" stroke-width="1.2"/>
<path d="M1827.6 22.6 H1838.4 V33.4 H1827.6 Z M1830.4 22.6 V20 Q1830.4 19.6 1830.8 19.6 H1841.4 Q1841.8 19.6 1841.8 20 V30.4 Q1841.8 30.8 1841.4 30.8 H1838.4" fill="none" stroke="#cccccc" stroke-width="1.2"/>
<path d="M1884.3 19.3 L1898 33 M1898 19.3 L1884.3 33" stroke="#cccccc" stroke-width="1.3"/>
<rect x="1851.6" y="58.6" width="16.2" height="15.6" rx="1.8" fill="none" stroke="#c5c5c0" stroke-width="1.3"/>
<path d="M1859.7 58.6 V74.2" stroke="#c5c5c0" stroke-width="1.3"/>
<circle cx="1884.2" cy="67" r="1.25" fill="#c5c5c0"/>
<circle cx="1891.4" cy="67" r="1.25" fill="#c5c5c0"/>
<circle cx="1898.2" cy="67" r="1.25" fill="#c5c5c0"/>
<g transform="translate(76.8,61.2)" fill="#a074c4"><path d="M2.5 1.2 C4.5 -0.3 7 0.3 7.6 1.5 C9 0.6 12.5 0.6 14 2.2 C15.6 3.8 15.6 6.5 14.5 7.6 L14.4 10.8 L12.1 10.8 L12 8.8 L9.3 8.8 L9.2 10.8 L7 10.8 L6.9 8.6 C6.1 8.9 5.5 8.4 5.2 8.0 L4.6 10.4 C3.8 10.9 2.4 10.6 2.0 9.6 C3.2 9.6 3.4 9 3.3 8.0 C1.0 7.7 0.2 5.8 0.4 4.2 C0.6 2.8 1.4 1.9 2.5 1.2 Z"/></g>
<rect x="232.5" y="61.2" width="10.5" height="1.7" fill="#c5c5c0"/><rect x="232.5" y="64.8" width="7.5" height="1.7" fill="#c5c5c0"/><rect x="232.5" y="68.4" width="10.5" height="1.7" fill="#c5c5c0"/><rect x="232.5" y="72.0" width="8" height="1.7" fill="#c5c5c0"/>
<rect x="433" y="61.2" width="10.5" height="1.7" fill="#e0e0dc"/><rect x="433" y="64.8" width="7.5" height="1.7" fill="#e0e0dc"/><rect x="433" y="68.4" width="10.5" height="1.7" fill="#e0e0dc"/><rect x="433" y="72.0" width="8" height="1.7" fill="#e0e0dc"/>
<rect x="628.5" y="61.2" width="10.5" height="1.7" fill="#c5c5c0"/><rect x="628.5" y="64.8" width="7.5" height="1.7" fill="#c5c5c0"/><rect x="628.5" y="68.4" width="10.5" height="1.7" fill="#c5c5c0"/><rect x="628.5" y="72.0" width="8" height="1.7" fill="#c5c5c0"/>
<rect x="849" y="61.2" width="10.5" height="1.7" fill="#c5c5c0"/><rect x="849" y="64.8" width="7.5" height="1.7" fill="#c5c5c0"/><rect x="849" y="68.4" width="10.5" height="1.7" fill="#c5c5c0"/><rect x="849" y="72.0" width="8" height="1.7" fill="#c5c5c0"/>
<g transform="translate(1059.5,61.2)" fill="#a074c4"><path d="M2.5 1.2 C4.5 -0.3 7 0.3 7.6 1.5 C9 0.6 12.5 0.6 14 2.2 C15.6 3.8 15.6 6.5 14.5 7.6 L14.4 10.8 L12.1 10.8 L12 8.8 L9.3 8.8 L9.2 10.8 L7 10.8 L6.9 8.6 C6.1 8.9 5.5 8.4 5.2 8.0 L4.6 10.4 C3.8 10.9 2.4 10.6 2.0 9.6 C3.2 9.6 3.4 9 3.3 8.0 C1.0 7.7 0.2 5.8 0.4 4.2 C0.6 2.8 1.4 1.9 2.5 1.2 Z"/></g>
<rect x="1277.5" y="61.2" width="10.5" height="1.7" fill="#c5c5c0"/><rect x="1277.5" y="64.8" width="7.5" height="1.7" fill="#c5c5c0"/><rect x="1277.5" y="68.4" width="10.5" height="1.7" fill="#c5c5c0"/><rect x="1277.5" y="72.0" width="8" height="1.7" fill="#c5c5c0"/>
<path d="M582.5 61.8 L593 72.3 M593 61.8 L582.5 72.3" stroke="#f0f0f0" stroke-width="1.5"/>
<path d="M155.5 97.5 L161.0 103 L155.5 108.5" fill="none" stroke="#c0c0ba" stroke-width="1.4"/>
<path d="M214.5 97.5 L220.0 103 L214.5 108.5" fill="none" stroke="#c0c0ba" stroke-width="1.4"/>
<path d="M323.5 97.5 L329.0 103 L323.5 108.5" fill="none" stroke="#c0c0ba" stroke-width="1.4"/>
<path d="M490.5 97.5 L496.0 103 L490.5 108.5" fill="none" stroke="#c0c0ba" stroke-width="1.4"/>
<path d="M573.5 97.5 L579.0 103 L573.5 108.5" fill="none" stroke="#c0c0ba" stroke-width="1.4"/>
<rect x="345.5" y="96.8" width="10.5" height="1.7" fill="#d0d0cb"/><rect x="345.5" y="100.4" width="7.5" height="1.7" fill="#d0d0cb"/><rect x="345.5" y="104.0" width="10.5" height="1.7" fill="#d0d0cb"/><rect x="345.5" y="107.6" width="8" height="1.7" fill="#d0d0cb"/>
<path d="M504.5 99.5 L514 95 L521 98.5 V104.5 L511.5 109.5 L504.5 105.5 Z M504.5 99.5 L511.5 103.5 L521 98.5 M511.5 103.5 V109.5" fill="none" stroke="#75beff" stroke-width="1.6" stroke-linejoin="round"/>
<path d="M595.7 94.5 L603 98.5 V106.5 L595.7 110.3 L588.5 106.5 V98.5 Z M588.5 98.5 L595.7 102.5 L603 98.5 M595.7 102.5 V110.3" fill="none" stroke="#b180d7" stroke-width="1.6" stroke-linejoin="round"/>
<circle cx="27.9" cy="1024" r="7.4" fill="none" stroke="#ffffff" stroke-width="1.3"/>
<path d="M24.6 1020.7 L31.2 1027.3 M31.2 1020.7 L24.6 1027.3" stroke="#ffffff" stroke-width="1.2"/>
<path d="M61.4 1016.6 L68.8 1030 H54 Z" fill="none" stroke="#ffffff" stroke-width="1.3" stroke-linejoin="round"/>
<path d="M61.4 1021.5 V1026 M61.4 1027.4 V1028.6" stroke="#ffffff" stroke-width="1.2"/>
<path d="M103.2 1023.6 H108.5 V1025 L110 1026.3 L108.5 1027.6 V1029.2 H103.2 Z" fill="none" stroke="#ffffff" stroke-width="1.3"/>
<circle cx="1853.8" cy="1024" r="3" fill="none" stroke="#ffffff" stroke-width="1.2"/>
<path d="M1848 1031.8 C1848.5 1028.5 1851 1027.3 1853.8 1027.3 C1856.6 1027.3 1859 1028.5 1859.5 1031.8" fill="none" stroke="#ffffff" stroke-width="1.2"/>
<path d="M1851.6 1019 V1016.6 H1863.4 V1023.8 H1859.8 L1857.6 1026" fill="none" stroke="#ffffff" stroke-width="1.2"/>
<path d="M1887.5 1028.5 H1898.2 Q1896.6 1027 1896.6 1025 V1021.5 Q1896.6 1016.6 1892.9 1016.6 Q1889.1 1016.6 1889.1 1021.5 V1025 Q1889.1 1027 1887.5 1028.5 Z M1891.5 1029.8 Q1892.9 1031.4 1894.3 1029.8" fill="none" stroke="#ffffff" stroke-width="1.2"/>
</svg>
</body></html>
